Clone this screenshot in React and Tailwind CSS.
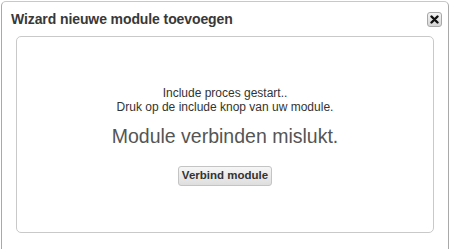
export default function App() {
  return (
    <div className="w-[450px] h-[249px] overflow-hidden bg-white font-['Liberation_Sans',Arial,sans-serif]">
      <div className="ml-px mt-px w-[448px] h-[260px] border border-[#a9a9a9] border-t-[#c8c8c8] rounded-t-[5px] bg-white">
        {/* Header */}
        <div className="h-[34px] pl-[9px] pr-[6px] flex items-center justify-between">
          <span className="text-[14px] font-bold text-[#383838] tracking-[-0.1px]">Wizard nieuwe module toevoegen</span>
          <button className="w-[15px] h-[15px] flex items-center justify-center rounded-[3px] border border-[#a8a8a8] bg-gradient-to-b from-[#f4f4f4] to-[#d6d6d6]">
            <svg width="9" height="9" viewBox="0 0 9 9">
              <path d="M1.5 1.5 L7.5 7.5 M7.5 1.5 L1.5 7.5" stroke="#111" strokeWidth="2.4" strokeLinecap="round" />
            </svg>
          </button>
        </div>

        {/* Body */}
        <div className="ml-[14px] w-[418px] h-[197px] border border-[#c9c9c9] rounded-[5px] flex flex-col items-center pt-[49px] text-[#333]">
          <p className="text-[12px] leading-[14px]">Include proces gestart..</p>
          <p className="text-[12px] leading-[14px]">Druk op de include knop van uw module.</p>
          <p className="text-[19.5px] leading-[24px] text-[#555] mt-[10px]">Module verbinden mislukt.</p>
          <button className="mt-[18px] h-[20px] w-[94px] rounded-[3px] border border-[#c4c4c4] bg-gradient-to-b from-[#f6f6f6] to-[#dedede] text-[11.5px] font-bold text-[#333] leading-none">
            Verbind module
          </button>
        </div>
      </div>
    </div>
  );
}
